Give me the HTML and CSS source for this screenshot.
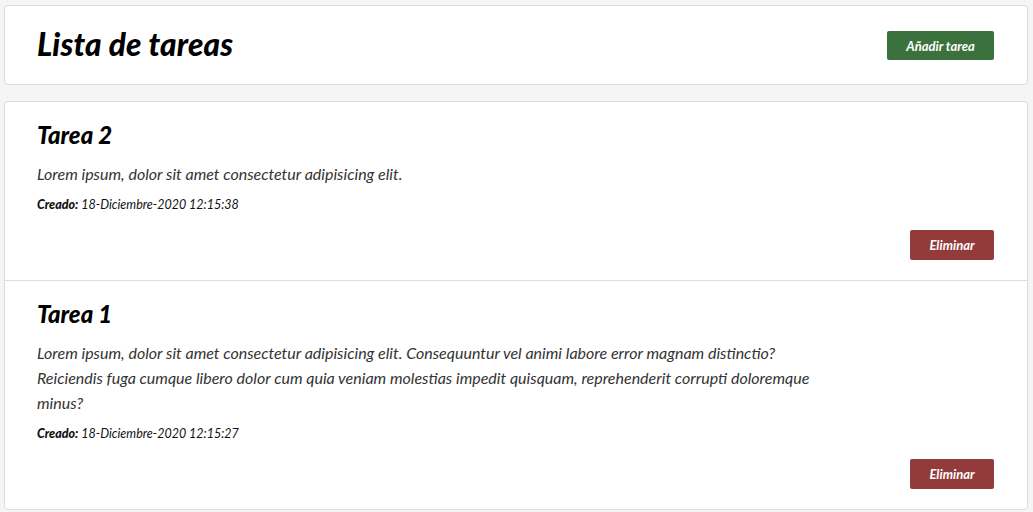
FILE: index.html
```html
<!DOCTYPE html>
<html lang="es">
<head>
<meta charset="utf-8">
<title>Lista de tareas</title>
<link rel="stylesheet" href="styles.css">
</head>
<body>
  <header class="card header">
    <h1 class="page-title">Lista de tareas</h1>
    <button class="btn btn-add">Añadir tarea</button>
  </header>
  <main class="card list">
    <article class="task">
      <h2 class="task-title">Tarea 2</h2>
      <p class="task-text">Lorem ipsum, dolor sit amet consectetur adipisicing elit.</p>
      <p class="task-meta"><strong>Creado:</strong> 18-Diciembre-2020 12:15:38</p>
      <div class="task-actions"><button class="btn btn-del">Eliminar</button></div>
    </article>
    <article class="task">
      <h2 class="task-title">Tarea 1</h2>
      <p class="task-text">Lorem ipsum, dolor sit amet consectetur adipisicing elit. Consequuntur vel animi labore error magnam distinctio? Reiciendis fuga cumque libero dolor cum quia veniam molestias impedit quisquam, reprehenderit corrupti doloremque minus?</p>
      <p class="task-meta"><strong>Creado:</strong> 18-Diciembre-2020 12:15:27</p>
      <div class="task-actions"><button class="btn btn-del">Eliminar</button></div>
    </article>
  </main>
</body>
</html>
```
FILE: styles.css
```css
* { box-sizing: border-box; }
body {
  margin: 0;
  padding: 5px 5px 0 4px;
  background: #f5f5f5;
  font-family: Lato, "Open Sans", sans-serif;
  font-style: italic;
  color: #222;
}
.card {
  background: #fff;
  border: 1px solid #dddddd;
  border-radius: 4px;
}
.header {
  height: 80px;
  padding: 0 33px 0 32px;
  display: flex;
  align-items: center;
  justify-content: space-between;
  margin-bottom: 16px;
}
.page-title {
  margin: 0 0 3px;
  font-size: 31.5px;
  font-weight: 900;
  font-style: italic;
  color: #000;
  letter-spacing: 0.2px;
}
.btn {
  border: none;
  border-radius: 2px;
  color: #fff;
  font-family: Lato, sans-serif;
  font-style: italic;
  font-weight: 700;
  font-size: 13px;
  cursor: pointer;
}
.btn-add {
  background: #3b713d;
  width: 107px;
  height: 29px;
  margin-top: 1px;
}
.btn-del {
  background: #933a3a;
  width: 84px;
  height: 30px;
}
.task {
  padding: 19px 33px 20px 32px;
  border-bottom: 1px solid #dddddd;
}
.task:last-child { border-bottom: none; }
.task-title {
  margin: 0;
  font-size: 24px;
  line-height: 28px;
  font-weight: 900;
  color: #000;
}
.task-text {
  margin: 12px 0 0;
  max-width: 780px;
  font-size: 16px;
  line-height: 25px;
  font-weight: 400;
  color: #333;
}
.task-meta {
  margin: 9px 0 0;
  font-size: 12.5px;
  line-height: 20px;
  color: #111;
}
.task-meta strong { font-weight: 900; }
.task-actions {
  display: flex;
  justify-content: flex-end;
  margin-top: 15px;
}
```
